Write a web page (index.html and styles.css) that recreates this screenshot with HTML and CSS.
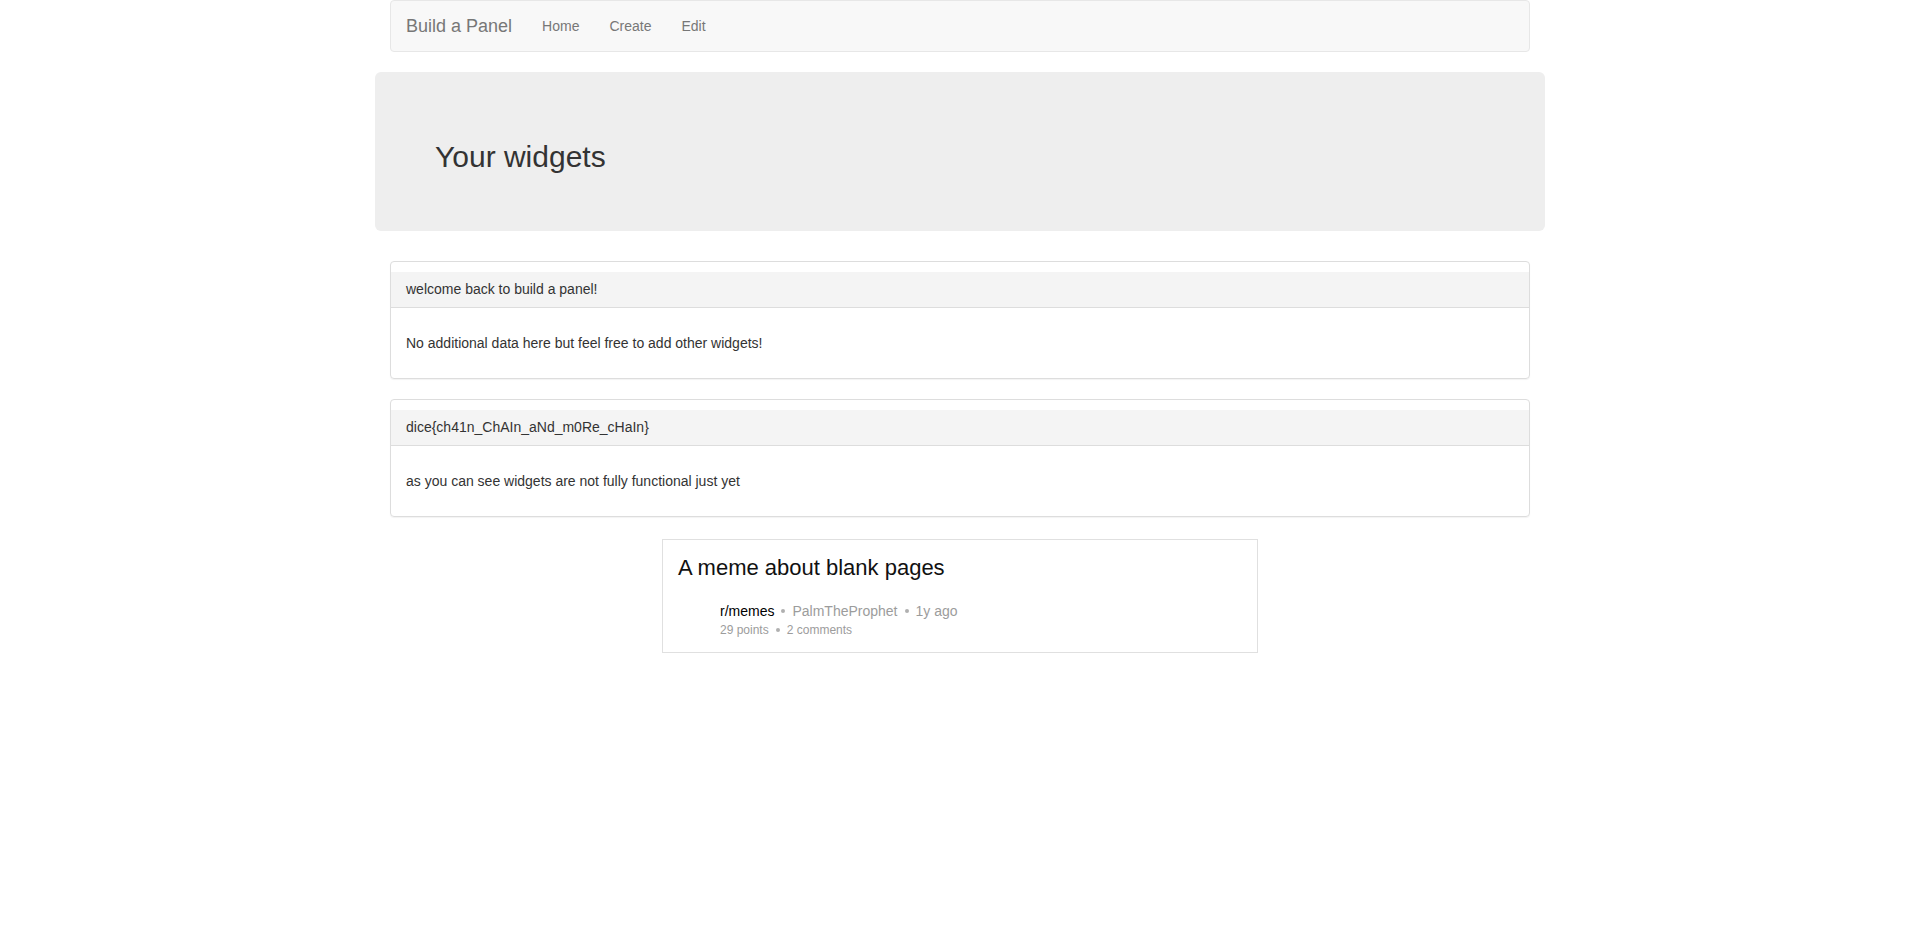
FILE: index.html
```html
<!DOCTYPE html>
<html>
<head>
<meta charset="utf-8">
<title>Build a Panel</title>
<link rel="stylesheet" href="styles.css">
</head>
<body>
<div class="container">
  <nav class="navbar">
    <span class="brand">Build a Panel</span>
    <ul class="nav">
      <li>Home</li>
      <li>Create</li>
      <li>Edit</li>
    </ul>
  </nav>
  <div class="row">
    <div class="jumbotron">
      <h2>Your widgets</h2>
    </div>
  </div>
  <div class="panel">
    <div class="panel-heading">welcome back to build a panel!</div>
    <div class="panel-body">No additional data here but feel free to add other widgets!</div>
  </div>
  <div class="panel">
    <div class="panel-heading">dice{ch41n_ChAIn_aNd_m0Re_cHaIn}</div>
    <div class="panel-body">as you can see widgets are not fully functional just yet</div>
  </div>
  <div class="card">
    <div class="card-title">A meme about blank pages</div>
    <div class="card-meta">
      <div class="meta-line">
        <span class="sub">r/memes</span><span class="dot"></span><span>PalmTheProphet</span><span class="dot"></span><span>1y ago</span>
      </div>
      <div class="meta-line small">
        <span>29 points</span><span class="dot"></span><span>2 comments</span>
      </div>
    </div>
  </div>
</div>
</body>
</html>
```
FILE: styles.css
```css
* { box-sizing: border-box; }
html, body { margin: 0; padding: 0; }
body {
  font-family: "Liberation Sans", Arial, Helvetica, sans-serif;
  font-size: 14px;
  line-height: 20px;
  color: #333;
  background: #fff;
}
.container {
  width: 1170px;
  margin: 0 auto;
  padding: 0 15px;
}
.navbar {
  display: flex;
  align-items: center;
  height: 52px;
  background: #f8f8f8;
  border: 1px solid #e7e7e7;
  border-radius: 4px;
  margin-bottom: 20px;
}
.brand {
  padding: 15px;
  font-size: 18px;
  line-height: 20px;
  color: #777;
}
.nav {
  display: flex;
  list-style: none;
  margin: 0;
  padding: 0;
}
.nav li {
  padding: 15px;
  color: #777;
  line-height: 20px;
}
.row {
  margin: 0 -15px;
}
.jumbotron {
  background: #eee;
  border-radius: 6px;
  padding: 48px 60px;
  margin-bottom: 30px;
}
.jumbotron h2 {
  margin: 20px 0 10px;
  font-size: 30px;
  font-weight: 500;
  line-height: 33px;
  color: #333;
}
.panel {
  border: 1px solid #ddd;
  border-radius: 4px;
  padding-top: 10px;
  margin-bottom: 20px;
  box-shadow: 0 1px 1px rgba(0,0,0,0.05);
}
.panel-heading {
  background: #f4f4f4;
  padding: 7px 15px 8px;
  border-bottom: 1px solid #ddd;
}
.panel-body {
  padding: 25px 15px;
}
.card {
  width: 596px;
  margin: 22px auto 0;
  border: 1px solid #e0e0e0;
  padding: 15px 15px 13px 15px;
}
.card-title {
  font-size: 22px;
  line-height: 26px;
  color: #111;
}
.card-meta {
  margin: 20px 0 0 42px;
}
.meta-line {
  display: flex;
  align-items: center;
  font-size: 14px;
  line-height: 20px;
  color: #9c9c9c;
}
.meta-line.small {
  font-size: 12px;
  line-height: 18px;
}
.sub { color: #000; }
.dot {
  width: 4px;
  height: 4px;
  border-radius: 50%;
  background: #b0b0b0;
  margin: 0 7px 0 7px;
}
```
